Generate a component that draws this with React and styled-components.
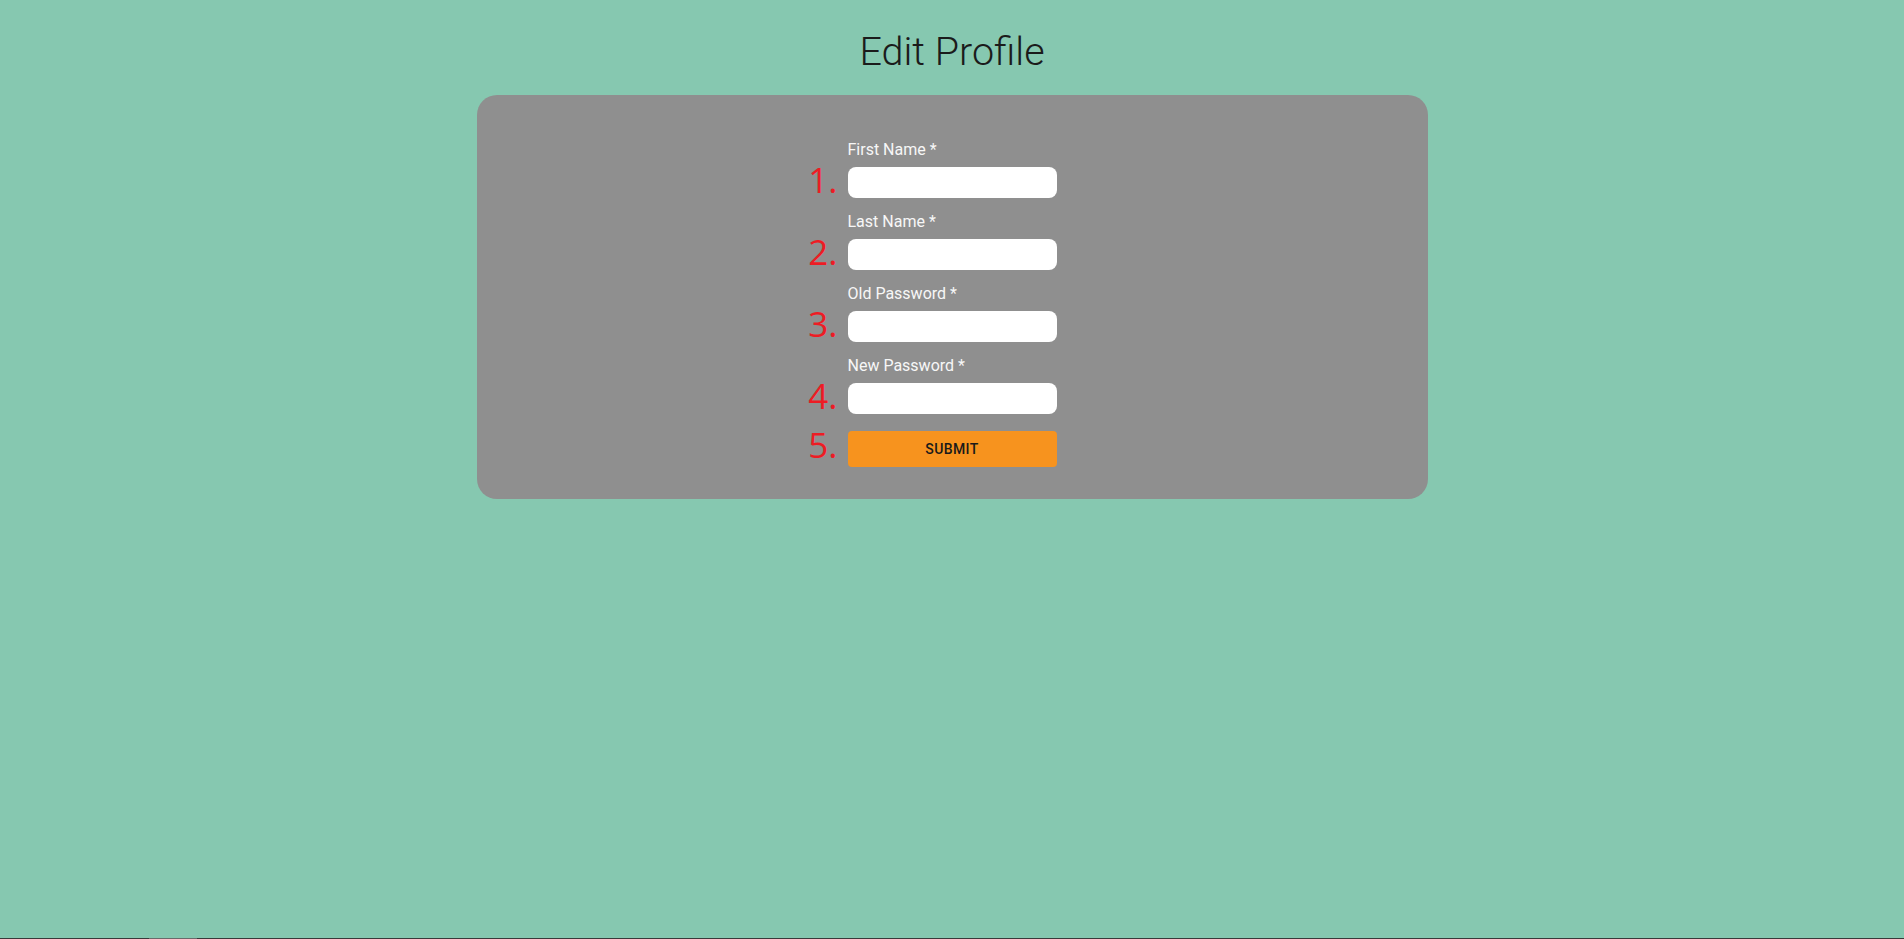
import React from "react";
import styled, { createGlobalStyle } from "styled-components";

const Global = createGlobalStyle`
  html, body { margin: 0; padding: 0; }
  body {
    background: #86c8b0;
    font-family: Roboto, "Liberation Sans", sans-serif;
    min-height: 939px;
  }
`;

const Page = styled.div`
  display: flex;
  flex-direction: column;
  align-items: center;
  padding-top: 28px;
`;

const Title = styled.h1`
  margin: 0 0 20px;
  font-family: Roboto, sans-serif;
  font-weight: 300;
  font-size: 39.5px;
  line-height: 47px;
  color: #1b1b1b;
`;

const Card = styled.div`
  box-sizing: border-box;
  width: 951px;
  background: #8f8f8f;
  border-radius: 20px;
  padding: 46px 0 32px;
  display: flex;
  flex-direction: column;
  gap: 15px;
`;

const Row = styled.div`
  display: grid;
  grid-template-columns: 1fr 209px 1fr;
  align-items: ${(p) => (p.$center ? "center" : "end")};
  margin-top: ${(p) => (p.$center ? "2px" : "0")};
`;

const Num = styled.span`
  justify-self: end;
  padding-right: 10px;
  padding-bottom: ${(p) => p.$pb || 0}px;
  margin-top: ${(p) => p.$mt || 0}px;
  font-family: "Open Sans", sans-serif;
  font-size: 35px;
  line-height: 35px;
  color: #ed1c24;
  white-space: nowrap;
`;

const Field = styled.div`
  display: flex;
  flex-direction: column;
`;

const Label = styled.label`
  font-size: 16px;
  line-height: 18px;
  color: #f7f7f7;
  margin-bottom: 8px;
`;

const Input = styled.input`
  box-sizing: border-box;
  height: 31px;
  width: 209px;
  border: none;
  border-radius: 8px;
  background: #ffffff;
  padding: 0 10px;
  font-size: 15px;
  outline: none;
`;

const Button = styled.button`
  box-sizing: border-box;
  width: 209px;
  height: 36px;
  border: none;
  border-radius: 4px;
  background: #f7931e;
  color: #1a1a1a;
  font-family: Roboto, sans-serif;
  font-weight: 500;
  font-size: 14px;
  letter-spacing: 0.4px;
  text-transform: uppercase;
  cursor: pointer;
`;

const BottomStrip = styled.div`
  position: fixed;
  left: 0;
  right: 0;
  bottom: 0;
  height: 1px;
  background: #3a3a3a;
`;

const StripMark = styled.div`
  position: absolute;
  left: 149px;
  width: 48px;
  top: 0;
  height: 1px;
  background: #6a6a6a;
`;

const fields = ["First Name", "Last Name", "Old Password", "New Password"];

export default function App() {
  return (
    <>
      <Global />
      <Page>
        <Title>Edit Profile</Title>
        <Card>
          {fields.map((f, i) => (
            <Row key={f}>
              <Num $pb={1}>{i + 1}.</Num>
              <Field>
                <Label>{f} *</Label>
                <Input type={i > 1 ? "password" : "text"} />
              </Field>
              <span />
            </Row>
          ))}
          <Row $center>
            <Num $mt={-9}>5.</Num>
            <Button>Submit</Button>
            <span />
          </Row>
        </Card>
      </Page>
      <BottomStrip>
        <StripMark />
      </BottomStrip>
    </>
  );
}
